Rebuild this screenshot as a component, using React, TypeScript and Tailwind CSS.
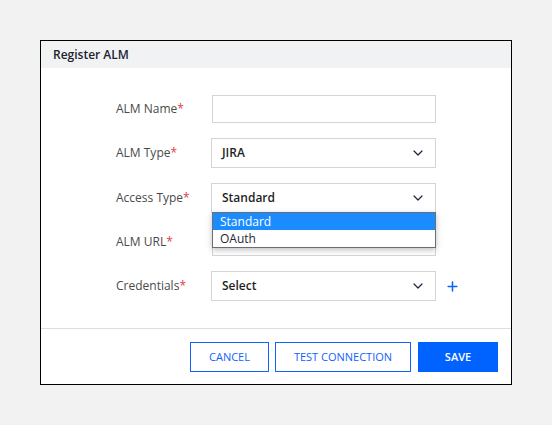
import { ChevronDown, Plus } from 'lucide-react';

const Label = ({ text }: { text: string }) => (
  <label className="w-[95px] shrink-0 text-[12px] text-[#4a4a4a]">
    {text}
    <span className="text-[#e5393f]">*</span>
  </label>
);

const SelectBox = ({ value }: { value: string }) => (
  <div className="flex h-[30px] w-[225px] items-center justify-between border border-[#d4d5d8] bg-white pl-[10px] pr-[9px]">
    <span className="text-[12px] font-semibold text-[#1f1f1f]">{value}</span>
    <ChevronDown size={16} strokeWidth={1.8} className="text-[#1d2538]" />
  </div>
);

export default function App() {
  return (
    <div className="min-h-[425px] bg-[#f2f2f3] pt-[40px] font-['Open_Sans',sans-serif]">
      <div className="mx-[40px] border border-black bg-white">
        <div className="flex h-[27px] items-center bg-[#f1f2f3] px-[12px]">
          <h2 className="text-[12px] font-semibold text-[#1d2330]">Register ALM</h2>
        </div>

        <div className="flex flex-col gap-[15px] pb-[27px] pl-[75px] pt-[27px]">
          <div className="flex items-center">
            <Label text="ALM Name" />
            <div className="ml-[1px] h-[28px] w-[224px] border border-[#d4d5d8] bg-white" />
          </div>
          <div className="flex items-center">
            <Label text="ALM Type" />
            <SelectBox value="JIRA" />
          </div>
          <div className="relative z-10 flex items-center">
            <Label text="Access Type" />
            <div className="relative">
              <SelectBox value="Standard" />
              <ul className="absolute left-[1px] top-[29px] w-[224px] border border-[#6e6e6e] bg-white text-[12px] shadow-[0_2px_6px_rgba(0,0,0,0.25)]">
                <li className="h-[17px] bg-[#1a8cff] pl-[7px] leading-[17px] text-white">Standard</li>
                <li className="h-[17px] pl-[7px] leading-[17px] text-[#1f2937]">OAuth</li>
              </ul>
            </div>
          </div>
          <div className="flex items-center">
            <Label text="ALM URL" />
            <div className="ml-[1px] h-[28px] w-[224px] border border-[#d4d5d8] bg-white" />
          </div>
          <div className="flex items-center">
            <Label text="Credentials" />
            <SelectBox value="Select" />
            <Plus size={15} strokeWidth={2.5} className="ml-[9px] text-[#0f62fe]" />
          </div>
        </div>

        <div className="flex justify-end border-t border-[#dedede] pb-[12px] pl-[12px] pr-[13px] pt-[13px]">
          <button className="h-[30px] w-[79px] border border-[#0f62fe] text-[11px] text-[#0f62fe]">CANCEL</button>
          <button className="ml-[6px] h-[30px] w-[136px] border border-[#0f62fe] text-[11px] text-[#0f62fe]">TEST CONNECTION</button>
          <button className="ml-[7px] h-[30px] w-[80px] bg-[#0062ff] text-[11px] font-semibold text-white">SAVE</button>
        </div>
      </div>
    </div>
  );
}
